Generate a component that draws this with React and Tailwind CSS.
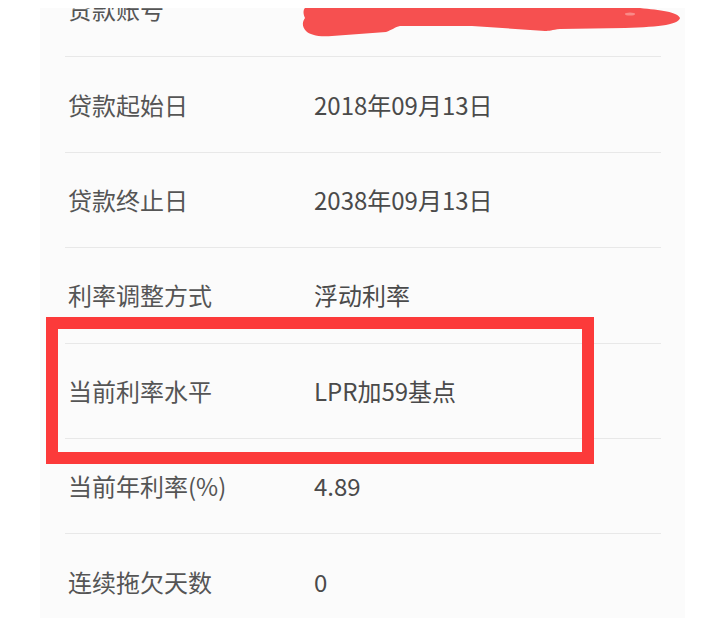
import React from "react";

const rows = [
  ["贷款账号", ""],
  ["贷款起始日", "2018年09月13日"],
  ["贷款终止日", "2038年09月13日"],
  ["利率调整方式", "浮动利率"],
  ["当前利率水平", "LPR加59基点"],
  ["当前年利率(%)", "4.89"],
  ["连续拖欠天数", "0"],
];

export default function App() {
  return (
    <div
      className="relative w-[720px] h-[618px] bg-white overflow-hidden flex flex-col"
      style={{ fontFamily: '"Noto Sans CJK SC", "Noto Sans", sans-serif' }}
    >
      <div className="h-[8px] bg-white shrink-0" />
      <div className="ml-[40px] w-[645px] flex-1 bg-[#fbfbfb] overflow-hidden pl-[25px] pr-[24px]">
        <div className="-mt-[46px] flex flex-col">
          {rows.map(([label, value]) => (
            <div
              key={label}
              className="h-[95.4px] shrink-0 flex items-center border-b border-[#e8e8e8] pl-[3px] text-[24px] leading-none"
            >
              <div className="w-[246px] text-[#555555]">{label}</div>
              <div className="text-[#4a4a4a]">{value}</div>
            </div>
          ))}
        </div>
      </div>

      {/* red scribble over account number */}
      <svg
        className="absolute left-0 top-0"
        width="720"
        height="60"
        viewBox="0 0 720 60"
      >
        <path
          d="M305,8 L640,8 C660,10 678,12 680,18 C679,24 662,27 625,28 L560,29 C552,30 549,31 545,31 L472,26 L400,26 C395,27 392,30 386,32 L332,36 C318,37 310,35 306,31 C302,27 302,22 305,18 C303,14 303,10 305,8 Z"
          fill="#f65050"
        />
        <ellipse cx="630" cy="14" rx="5" ry="1.5" fill="#f98a88" />
      </svg>

      {/* red highlight box */}
      <div className="absolute left-[46px] top-[317px] w-[548px] h-[147px] border-[12px] border-[#fc3a3a]" />
    </div>
  );
}
